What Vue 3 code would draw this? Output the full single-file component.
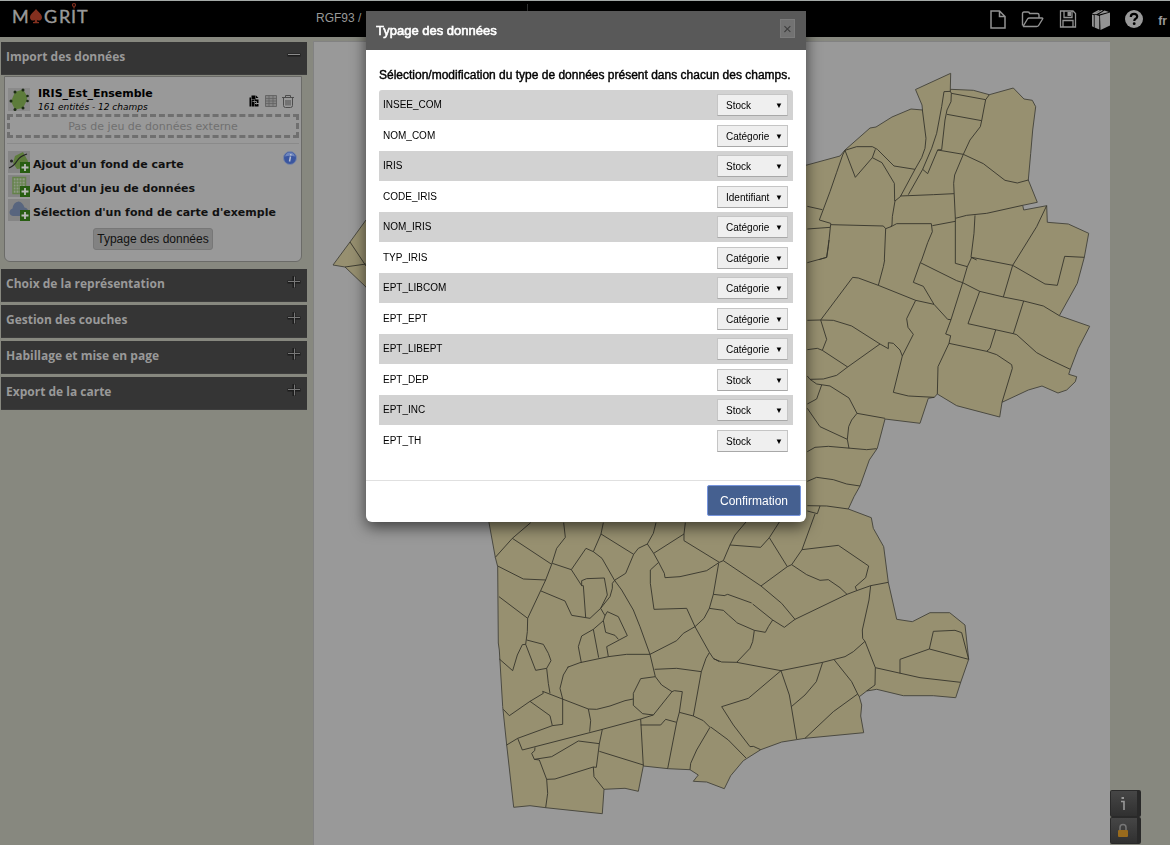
<script setup>
import { ref } from 'vue'

const fields = ref([
  { name: 'INSEE_COM', type: 'Stock' },
  { name: 'NOM_COM', type: 'Catégorie' },
  { name: 'IRIS', type: 'Stock' },
  { name: 'CODE_IRIS', type: 'Identifiant' },
  { name: 'NOM_IRIS', type: 'Catégorie' },
  { name: 'TYP_IRIS', type: 'Catégorie' },
  { name: 'EPT_LIBCOM', type: 'Catégorie' },
  { name: 'EPT_EPT', type: 'Catégorie' },
  { name: 'EPT_LIBEPT', type: 'Catégorie' },
  { name: 'EPT_DEP', type: 'Stock' },
  { name: 'EPT_INC', type: 'Stock' },
  { name: 'EPT_TH', type: 'Stock' }
])
const types = ['Stock', 'Catégorie', 'Identifiant']
const sections = ['Choix de la représentation', 'Gestion des couches', 'Habillage et mise en page', 'Export de la carte']
</script>

<template>
  <div class="app">
    <header class="topbar">
      <svg class="logo" width="78" height="26" viewBox="0 0 78 26" role="img" aria-label="Magrit">
        <g class="logo-text">
          <text x="0" y="20">M</text>
          <text x="32" y="20">G</text>
          <text x="47" y="20">R</text>
          <text x="59" y="20">I</text>
          <text x="65" y="20">T</text>
        </g>
        <path d="M24 6c2 3 6 5 6 8.500c0 3-3.500 4-5.200 2.200l.6 2.300h1.600v1.200h-6v-1.200h1.600l.6-2.300c-1.700 1.800-5.200.8-5.200-2.200c0-3.500 4-5.500 6-8.500z" fill="#84301f" />
        <circle cx="62" cy="2" r="1.500" fill="none" stroke="#84301f" stroke-width="1.200" />
        <path d="M62 3.500v2" stroke="#84301f" stroke-width="1.300" />
      </svg>
      <div class="projection"><button type="button">RGF93 /</button></div>
      <nav class="tools" aria-label="Projet">
        <button type="button" aria-label="Nouveau projet">
          <svg width="16" height="19" viewBox="0 0 16 19" fill="none" stroke="#929292" stroke-width="1.500"><path d="M1 1h8.500l5.500 5.500v11.500h-14zM9.500 1v5.500h5.500" /></svg>
        </button>
        <button type="button" aria-label="Ouvrir">
          <svg width="23" height="17" viewBox="0 0 22 17" fill="none" stroke="#929292" stroke-width="1.400" stroke-linejoin="round"><path d="M1 14.500V2.500q0-1.500 1.500-1.500h4q1.500 0 1.500 1.500h8q1.500 0 1.500 1.500v3M1.500 15.500l4.500-7.500q.6-1 2-1h12.500q1.200 0 .6 1l-4 6.500q-.6 1-2 1h-13.600" /></svg>
        </button>
        <button type="button" aria-label="Enregistrer">
          <svg width="18" height="18" viewBox="0 0 17 18" fill="none" stroke="#929292" stroke-width="1.300"><path d="M1 1h12.500l2.500 2.500v13.500h-15zM4.500 1v6.500h8v-6.500M3.500 17v-6.500h10v6.500" /><path d="M8 2h3.500v4h-3.500z" fill="#929292" stroke="none" /></svg>
        </button>
        <button type="button" aria-label="Documentation">
          <svg width="18" height="21" viewBox="0 0 18 21" fill="#929292"><path d="M8 6.500l10-3v13l-9.500 4.500z" /><path d="M0 5.500l1.800.8v12l-1.800-1zM2.600 5.500l4.700 1.500v13.500l-4.700-2z" /><path d="M0 4.500l6.500-3.500 1.500.6-6 3.600zM2.800 4.800l6.700-3.800 1.500.6-6.500 3.700zM6 5.800l6.500-4.300 4.500 1.500z" /></svg>
        </button>
        <button type="button" aria-label="Aide">
          <svg width="18" height="18" viewBox="0 0 18 18"><circle cx="9" cy="9" r="9" fill="#999" /><path d="M5.800 7q0-3.200 3.200-3.200t3.200 2.700q0 1.400-1.600 2.300-1.300.7-1.300 2.200" fill="none" stroke="#000" stroke-width="2.200" /><circle cx="9.200" cy="13.700" r="1.400" /></svg>
        </button>
        <button type="button" class="lang">fr</button>
      </nav>
    </header>

    <div class="workspace">
      <aside class="sidebar">
        <button type="button" class="section-head">Import des données
          <svg width="14" height="14" viewBox="0 0 14 14"><path d="M.5 4.500h13v3h-13z" fill="#1c1c1c" /><path d="M1 5.500h12" stroke="#8a8a8a" /></svg>
        </button>
        <div class="panel">
          <div class="layer">
            <svg class="tile" width="22" height="23" viewBox="0 0 22 23"><path d="M0 0h22v23H0z" fill="#8a8a8a" /><path d="M7 4l8-2.500 4 6.500v4l-4 8-8 1.500-4-8z" fill="#5d7c3b" /><g fill="#1b2a14"><circle cx="7" cy="4" r="1.500" /><circle cx="15" cy="2" r="1.500" /><circle cx="19.500" cy="8" r="1.300" /><circle cx="19.500" cy="13" r="1.300" /><circle cx="15" cy="20" r="1.500" /><circle cx="7" cy="21.500" r="1.500" /><circle cx="3" cy="13" r="1.500" /></g></svg>
            <div class="layer-text"><strong>IRIS_Est_Ensemble</strong><em>161 entités - 12 champs</em></div>
            <div class="layer-tools">
              <button type="button" aria-label="Remplacer"><svg width="11" height="12" viewBox="0 0 11 12"><path d="M2.500.5h4v4h-4zM7 .5l2.500 2.500h-2.500zM.5 2.500h1.500v9h-1.500zM2.500 5h3v6.500h-3zM6 4.500h3.500v3.500h-3.500zM6 9h3.500v2.500h-3.500z" /><path d="M3.500 6.500h4v3" fill="none" stroke="#999" stroke-width=".8" /></svg></button>
              <button type="button" aria-label="Table"><svg width="12" height="12" viewBox="0 0 12 12"><path d="M.5.5h11v11H.5z" fill="#858585" stroke="#666" /><path d="M4 .5v11M8 .5v11M.5 3.500h11M.5 6h11M.5 8.500h11" stroke="#5f5f5f" stroke-width=".7" /></svg></button>
              <button type="button" aria-label="Supprimer"><svg width="12" height="13" viewBox="0 0 12 13" fill="none" stroke="#4d4d4d"><path d="M0 2.500h12M3.500 2.500V.5h5v2M1.500 2.500v8q0 2 2 2h5q2 0 2-2v-8M4 5v5.500M6 5v5.500M8 5v5.500" /></svg></button>
            </div>
          </div>
          <div class="dropzone">Pas de jeu de données externe</div>
          <div class="adds">
            <button type="button">
              <svg width="22" height="22" viewBox="0 0 22 22"><path d="M0 0h22v22H0z" fill="#858585" /><path d="M7 5l8-4 5 9-2 7-9 1-4-6z" fill="#5d7c3b" /><path d="M1 17q5-2 8-7t10-7" fill="none" stroke="#222" stroke-width="1.200" /><circle cx="3.500" cy="10" r="1.500" fill="#222" /><path d="M12 11h10v11H12z" fill="#285d12" /><path d="M17 13v7M13.500 16.500h7" stroke="#bbb" stroke-width="1.800" /></svg>
              <span>Ajout d'un fond de carte</span>
            </button>
            <button type="button">
              <svg width="22" height="22" viewBox="0 0 22 22"><path d="M0 0h22v22H0z" fill="#858585" /><path d="M5 2.500h12.500v16H5z" fill="#8f9a86" stroke="#64824a" stroke-width="1.500" /><path d="M5 6h12M5 9h12M5 12h12M5 15h12M8 3v15M11 3v15M14 3v15" stroke="#64824a" /><path d="M12 11h10v11H12z" fill="#285d12" /><path d="M17 13v7M13.500 16.500h7" stroke="#bbb" stroke-width="1.800" /></svg>
              <span>Ajout d'un jeu de données</span>
            </button>
            <button type="button">
              <svg width="22" height="22" viewBox="0 0 22 22"><path d="M0 0h22v22H0z" fill="#858585" /><path d="M5 17q-3.500-.5-3.500-4 .3-3 3-3.500 1-6.500 6-7 4 .3 6 6 4 .8 4 5 0 3-2 3.500z" fill="#58657e" /><path d="M12 11h10v11H12z" fill="#285d12" /><path d="M17 13v7M13.500 16.500h7" stroke="#bbb" stroke-width="1.800" /></svg>
              <span>Sélection d'un fond de carte d'exemple</span>
            </button>
            <svg class="info" width="14" height="14" viewBox="0 0 14 14" role="img" aria-label="Information"><circle cx="7" cy="7" r="6.500" fill="#3a56a0" stroke="#7986a5" /><path d="M2 5.500q1-4 5-4t5 4q-5-1.500-10 0" fill="#6f86bd" /><path d="M7.800 3v1.500M7.500 5.500l-1 5" stroke="#b5bdd0" stroke-width="1.500" /></svg>
          </div>
          <button type="button" class="typing">Typage des données</button>
        </div>
        <div class="closed">
          <button v-for="s in sections" :key="s" type="button" class="section-head">{{ s }}
            <svg width="14" height="14" viewBox="0 0 14 14"><path d="M5.500 0h3v4.500h5v3h-5v4.500h-3v-4.500h-5v-3h5z" fill="#1c1c1c" /><path d="M7.500 .5v11M1 5.500h12" stroke="#777" /></svg>
          </button>
        </div>
      </aside>

      <main class="canvas">
        <svg class="map" viewBox="313 41 797 804" preserveAspectRatio="xMinYMin meet" role="img" aria-label="IRIS_Est_Ensemble">
          <path class="land" d="M807 165L840 156 845 150 870 128 876 127 892 117 911 109 922.500 110 922 105 915.500 89.500 950.700 73.300 950.300 89.300 973.300 90.300 989.300 94.700 1013.300 88 1024 99 1032.300 100.300 1035.700 106.700 1032.700 130 1030.700 153.300 1028.300 180 1037.300 202.300 1022.700 205.300 1023.700 210 1046.700 205.700 1047.300 222.300 1068.300 224 1088.700 233.300 1084.300 257.300 1077.300 283.300 1059.300 315.700 1089.700 326.300 1078.300 348.300 1070.300 369.300 1068.700 374.300 1076.700 376.700 1075.300 381.700 1066.700 390 1058 393 1042 386 1028.300 390 1002 402.300 999.700 417 956.700 405.700 937.300 394 934.300 397.300 928.300 398.300 920 423.300 885 419 877.300 448.300 869.300 460 860 486 854 496.700 848.300 509 871.300 517.700 873.300 528.300 883.700 546.700 888.300 582.300 896.700 619.300 912.300 621.700 930 612.700 949.700 612.700 965 625 968.700 659.300 960.700 682.300 955.700 697.700 933.300 695.700 903.300 695.700 876.700 689.300 866.700 691 859.300 696.700 861.700 705 860.700 716 863.700 732.700 805 738.300 781.700 742 760.700 749.700 743.300 760.700 730.700 775.700 724.300 788.700 706.700 782 693.300 781.300 698.300 775 690 769.700 668.300 768.700 643.300 766 638.300 791.300 625 788.300 604 789.300 602.300 813.700 545.700 807.700 530 805.700 513.700 807.300 506.700 745 502.700 706.700 499.300 650 498.300 643 497.700 566.700 495.300 557.300 489 522.700 489 500 366 287 345 267 333 265 350 242 366 220Z" />
          <g class="limits">
            <path d="M350 242L366 266M345 267L366 264" />
            <path transform="translate(800 60) scale(.33333)" d="M22 439L67 449M135 271L128 285 110 337 90 395 75 435 58 480 92 490 92 494 250 498 257 506 273 500 276 495 277 470 285 423 301 410 345 328 282 318 232 268 217 260 170 260 135 271L166 352 217 293 226 268M217 293L246 308 283 370 284 423M22 507L91 502 92 494M91 502L85 560 80 592 57 599M257 506L253 600M273 500L290 491 394 491 397 515 383 548 365 600M397 497L466 484M367 149L378 235 375 265 365 293 345 328M432 95L425 140 410 220 395 265 368 328 383 341 413 270 425 269 435 180 441 150 453 125 454 100 451 94 432 95M368 328L325 404M301 408L400 404 462 401M451 88V94M454 100L557 119 568 104M441 163L545 182M557 119L551 150 545 182 541 200 510 240 490 283 413 270M490 283L464 345 461 370 466 475 466 600M490 283L550 311 615 361 652 369 685 360M466 475L500 466 560 460 668 436M525 466L522 520 513 592 530 600M740 437L710 500 648 600" />
            <path transform="translate(800 240) scale(.33333)" d="M22 68L80 52 87 0M254 60L250 80 235 136M365 60L361 68 340 127 370 139 402 193 443 238 453 239M361 68L470 122 488 128 539 154 610 171 671 183 730 198 778 227M466 60V70L502 80M515 52L502 80 488 128 453 239 437 282 452 287 447 310 414 380 412 462M515 52L638 76 648 60M638 76L610 171M638 76L735 132 772 136 794 49 853 52M539 154L504 251 640 281 671 183M587 270L570 325 560 334M447 310L560 334 590 344 635 374 637 385 606 487M640 281L650 284 710 338 745 357 811 388M22 241L62 240 158 112 175 114 235 136 347 181 402 193M347 181L320 236 324 262 340 283 307 348 280 457 325 468 403 472M62 240L100 241 155 258 240 312 265 326V308L280 310 300 330 307 348M62 240L80 298 67 331 52 325 22 329M67 331L143 381 240 312M143 381L110 406 70 417 30 418 22 408M30 418L50 432 90 438 147 474 171 520 255 535M65 435L50 477 22 492M22 505L60 560 142 598 146 560 155 540 171 520" />
            <path transform="translate(700 420) scale(.33333)" d="M442 58L447 85M322 95L345 82 385 79 500 89 530 86M322 184L350 172 400 179 440 192 480 198M322 257L380 258 445 267M360 258L352 281 322 273M345 282L306 389 275 434 262 440 208 353 238 306M138 306L105 345 90 375 70 422M90 375L182 382 208 353M306 389L415 376 506 438 497 473 466 500 470 512M262 440L183 498 70 422M275 434L320 464 360 481 385 479 420 503 441 523M183 498L245 550 285 598 441 523 470 512 512 497 565 487M512 497L507 540M75 526L83 523 155 549" />
            <path transform="translate(700 600) scale(.33333)" d="M158 12L218 60 253 82 285 58M218 60L205 80 196 97 163 91 110 68M163 91L158 125 150 145 110 187M507 0L487 90 488 115 495 124 526 203 525 255 500 273M495 124L460 155 435 170 368 187 243 212 110 187 65 186 40 176M243 212L145 295 65 320 100 375 150 440 160 439 182 449M243 212L268 285 274 320 290 417M274 320L315 285 349 245 368 187M403 180L455 245 473 282 478 290M473 282L400 335 315 415M526 203L660 233 782 247M600 220V178L688 147 700 94 765 91 785 98 806 178 688 147M32 381L85 420 138 474" />
            <path transform="translate(480 500) scale(.33333)" d="M46 172L97 115 152 68M97 115L215 193M251 68L256 112 230 145 215 193 197 240 143 355 142 395 137 433 127 434 112 465 98 512M137 433L167 511 200 505 213 482 205 460 190 433 140 420M53 198L130 237 197 240M57 290L143 355M58 477L98 512M217 190L274 209 318 145 340 155 366 175 403 240 425 270 460 330 480 380 510 463 526 530M274 209L305 257 305 242 320 236 373 234 382 285 362 325 330 355 275 346 255 303 183 273M305 257L310 257 317 352M362 325L390 290 397 265V250L405 240 437 220 461 163 363 102 370 68M363 102L340 155M461 163L475 145 502 132 520 100 528 68M502 132L521 160 612 102 616 68M521 160L536 187 511 210 511 250 522 328 620 325 645 380 688 457 700 475 718 485M536 187L553 220 555 233 600 230 680 212 718 187 730 182M718 187L612 122V102M716 190L700 283 688 325 672 355 645 380 610 400 590 422 510 463 440 463 385 470 300 488 262 502M688 325L730 331 745 345 770 367M700 283L735 287M362 325L375 347 382 335 415 350 442 407 380 440 385 470M375 347L370 362 377 397 405 406 415 418M370 362L340 388 305 408 295 440 304 488M340 388L356 473" />
            <path transform="translate(480 650) scale(.33333)" d="M200 55L205 100 210 130M70 178L88 197 150 154 190 130 188 124 247 147 325 177 350 178 390 168 435 152 460 147M150 154L210 197 217 227 248 223V147L240 115 250 75 265 50M80 285L113 265 217 227M113 265L127 300 360 240 482 207 520 195 576 125 545 105 526 80 482 86 460 130V166L488 191 520 195M325 177L332 212 329 245M524 58L590 55 664 65M688 8L678 25 664 65 640 198M576 125L583 122 607 125 598 187 590 217 563 356M598 187L640 198 670 212 690 232 650 300 632 340 630 359M482 207L490 348M482 225H542L557 208 590 217M165 292L164 302 155 310 163 328 215 320 295 273 358 281 367 238M163 328L178 330 200 388 225 387 340 351 349 352 358 281M358 304L490 345M200 388L203 430 197 473M340 351L342 380 372 418" />
          </g>
        </svg>
      </main>

      <div class="map-tools">
        <button type="button" aria-label="Informations"><svg width="10" height="16" viewBox="0 0 10 16"><path d="M3 5.500h3v8.500" stroke="#999" stroke-width="1.600" fill="none" /><path d="M3.500 1h2.500v2h-2.500z" fill="#999" /></svg></button>
        <button type="button" aria-label="Verrouiller"><svg width="12" height="16" viewBox="0 0 12 16"><path d="M3 8V4.500q0-3 3-3t3 3V8" fill="none" stroke="#777" stroke-width="1.500" /><rect x="1" y="7" width="10" height="7" rx="1" fill="#996b1d" /></svg></button>
      </div>
    </div>

    <div class="overlay">
      <form class="modal" role="dialog" aria-labelledby="modal-title" @submit.prevent>
        <div class="modal-head">
          <h2 id="modal-title">Typage des données</h2>
          <button type="button" class="close" aria-label="Fermer">×</button>
        </div>
        <div class="modal-body">
          <p>Sélection/modification du type de données présent dans chacun des champs.</p>
          <div class="rows">
            <div v-for="f in fields" :key="f.name" class="row">
              <label :for="f.name">{{ f.name }}</label>
              <span class="pick">
                <select :id="f.name" v-model="f.type"><option v-for="t in types" :key="t">{{ t }}</option></select>
                <span class="arrow" aria-hidden="true">▼</span>
              </span>
            </div>
          </div>
        </div>
        <div class="modal-foot"><button type="submit">Confirmation</button></div>
      </form>
    </div>
  </div>
</template>

<style>
body { background: #87887f; }
</style>

<style scoped>
* { box-sizing: border-box; }
button { font: inherit; color: inherit; background: none; border: 0; padding: 0; margin: 0; }
svg { display: block; flex: none; }
.app { display: flex; flex-direction: column; min-height: 100vh; background: #87887f; font-family: "Liberation Sans", Arial, sans-serif; font-size: 12px; }
.topbar { display: flex; align-items: center; height: 37px; background: #000; border-top: 1px solid #a5aaa8; color: #999; }
.logo { margin: 0 0 6px 12px; overflow: visible; }
.logo-text { font: 18px Lato, sans-serif; fill: #999; stroke: #999; stroke-width: .4; }
.projection { width: 302px; height: 36px; margin-left: 226px; overflow: hidden; display: flex; align-items: center; }
.projection button { width: 212px; height: 30px; text-align: left; border-right: 1px solid #333; padding-bottom: 2px; }
.tools { display: flex; align-items: center; gap: 15px; margin-left: auto; padding-right: 3px; }
.lang { font-weight: bold; font-size: 12px; padding-top: 4px; }
.workspace { flex: 1; display: flex; align-items: stretch; padding-top: 4px; }
.sidebar { width: 307px; padding-left: 1px; padding-top: 1px; flex: none; }
.section-head { display: flex; justify-content: space-between; align-items: flex-start; width: 100%; height: 33px; padding: 7px 6px 0 5px; background: #353535; color: #999; font: 700 12px/16px "Open Sans", "Noto Sans", sans-serif; text-align: left; border-bottom: 1px solid #3d3d3d; }
.panel { margin: 1px 5px 7px 3px; height: 186px; padding: 9px 2px 0; background: #999; border: 1px solid #6b6b68; border-radius: 0 0 6px 6px; font-family: "DejaVu Sans", sans-serif; color: #000; display: flex; flex-direction: column; }
.layer { display: flex; align-items: center; height: 26px; gap: 8px; padding-left: 1px; }
.layer-text { display: flex; flex-direction: column; flex: 1; padding-top: 2px; }
.layer-text strong { font-size: 11px; line-height: 14px; }
.layer-text em { font-size: 9px; line-height: 12px; }
.layer-tools { display: flex; gap: 5px; align-items: center; padding: 4px 5px 0 0; }
.dropzone { height: 24px; margin-top: 2px; border: 3px dashed #6f6f6f; color: #707070; font-size: 11px; line-height: 20px; text-align: center; }
.adds { position: relative; display: flex; flex-direction: column; gap: 2px; border-top: 1px solid #8a8a8a; margin-top: 5px; padding: 7px 0 0 1px; }
.adds button { display: flex; align-items: center; gap: 3px; height: 22px; font-size: 11px; font-weight: bold; color: #111; white-space: nowrap; }
.adds span { padding-top: 4px; }
.info { position: absolute; right: 2px; top: 7px; }
.typing { align-self: center; margin-top: 7px; height: 22px; padding: 0 3px; border: 1px solid #777; border-radius: 3px; background: #828282; color: #111; font: 12px "Liberation Sans", Arial, sans-serif; }
.closed { display: flex; flex-direction: column; gap: 3px; }
.canvas { flex: 1; margin-left: 6px; background: #999; border-top: 1px solid #828282; box-shadow: inset 1px 0 #828282; }
.map { width: 100%; height: auto; margin-top: -1px; }
.land { fill: #979070; stroke: #4b4a41; stroke-width: 1; }
.limits path { fill: none; stroke: #35342b; stroke-width: .9; vector-effect: non-scaling-stroke; }
.map-tools { width: 60px; flex: none; align-self: flex-end; padding-bottom: 1px; }
.map-tools button { display: flex; align-items: center; justify-content: center; width: 31px; height: 27px; padding-right: 2px; border-radius: 2px; border: 1px solid #292929; border-right-width: 4px; background: linear-gradient(#464646, #303030); }
.overlay { position: fixed; inset: 0; display: flex; justify-content: center; align-items: flex-start; padding: 11px 0 0 2px; }
.modal { width: 440px; background: #fff; border-radius: 0 0 6px 6px; box-shadow: 0 5px 15px rgba(0, 0, 0, .6); color: #000; }
.modal-head { display: flex; justify-content: space-between; height: 39px; padding: 8px 11px 0 10px; background: #595959; color: #fff; }
.modal-head h2 { margin: 0; font-size: 13px; font-weight: normal; line-height: 23px; -webkit-text-stroke: .6px #fff; }
.close { width: 15px; height: 19px; background: #727272; border: 1px solid #7b7b7b; color: #3d3d3d; font-size: 15px; line-height: 15px; }
.modal-body { padding: 15px 13px 24px; }
.modal-body p { margin: 0 0 5px; font-size: 12px; line-height: 20px; white-space: nowrap; -webkit-text-stroke: .4px #000; }
.rows { font-size: 10px; }
.row { display: flex; justify-content: space-between; align-items: flex-start; height: 31px; padding: 5px 5px 0 4px; }
.row:nth-child(odd) { height: 30px; padding-top: 4px; background: #d2d2d2; }
.row:first-child { border-radius: 3px 3px 0 0; }
.row label { line-height: 21px; }
.pick { position: relative; width: 71px; }
.pick select { display: block; appearance: none; width: 100%; height: 22px; padding: 0 16px 0 8px; border: 1px solid #c5c5c5; border-bottom-color: #a8a8a8; border-radius: 0; background: #efefef; color: #000; font: 10px "Liberation Sans", Arial, sans-serif; }
.arrow { position: absolute; right: 5px; top: 0; line-height: 24px; font-size: 8px; pointer-events: none; }
.modal-foot { display: flex; justify-content: flex-end; height: 42px; padding: 4px 5px 6px; border-top: 1px solid #e0e0e0; }
.modal-foot button { width: 94px; height: 31px; border: 1px solid #7795dd; border-radius: 2px; background: #456090; color: #fff; font-size: 12px; }
</style>
